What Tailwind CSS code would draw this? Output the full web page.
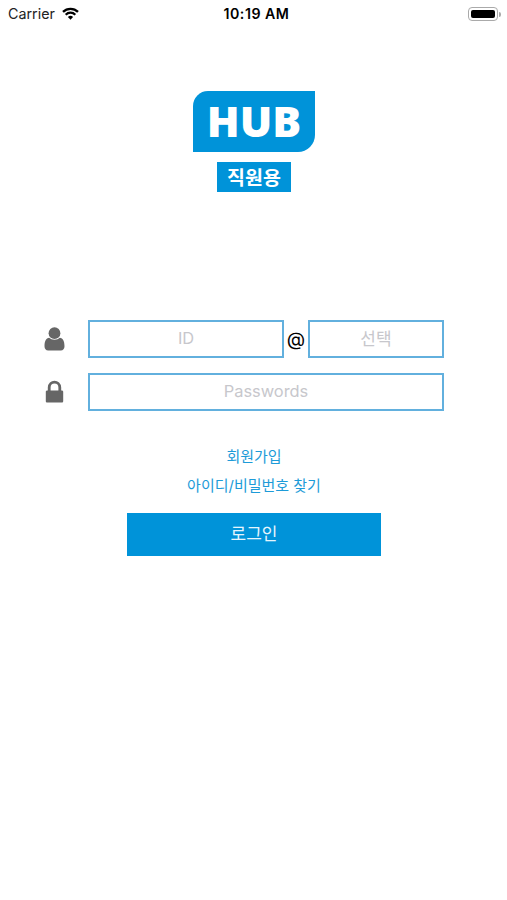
<!DOCTYPE html>
<html lang="ko">
<head>
    <meta charset="UTF-8">
    <meta name="viewport" content="width=device-width, initial-scale=1.0">
    <title>HUB 직원용</title>
    <script src="https://cdn.jsdelivr.net/npm/@tailwindcss/browser@4"></script>
</head>
<body class="min-h-screen overflow-hidden bg-white font-['Inter','Noto_Sans_CJK_KR',sans-serif] text-black">
    <!-- Status bar -->
    <header class="grid h-7 grid-cols-3 items-center pl-2 pr-1.5">
        <div class="flex items-center gap-[7px]">
            <span class="text-[14.3px] leading-none text-[#222]">Carrier</span>
            <svg class="h-[13px] w-[17px]" viewBox="0 0 17 13" fill="none" stroke="#000" stroke-width="2.3">
                <path d="M1 4.9a10.6 10.6 0 0 1 15 0" />
                <path d="M3.7 7.7a6.8 6.8 0 0 1 9.6 0" />
                <path d="M8.5 12.7L5.9 10a3.7 3.7 0 0 1 5.2 0z" fill="#000" stroke="none" />
            </svg>
        </div>
        <span class="pl-1 text-center text-[14.2px] font-semibold leading-none tracking-[0.5px] whitespace-nowrap">10:19 AM</span>
        <div class="flex items-center justify-end gap-px">
            <div class="h-[14px] w-[30px] rounded-[4px] border border-[#aaa] p-[2px]">
                <div class="h-full rounded-[2px] bg-black"></div>
            </div>
            <div class="h-[5px] w-[2px] rounded-r-full bg-[#aaa]"></div>
        </div>
    </header>

    <main>
        <!-- Logo -->
        <div class="mt-[63px] ml-[193px] flex w-[122px] flex-col items-center">
            <div class="flex h-[61px] w-full items-center justify-center rounded-tl-[15px] rounded-br-[17px] bg-[#0093d9] pb-[3px]">
                <span class="font-['Open_Sans',sans-serif] text-[43px] font-extrabold leading-none text-white">HUB</span>
            </div>
            <div class="mt-2.5 flex h-[30px] w-[74px] items-center justify-center bg-[#0093d9] pt-[3px]">
                <span class="text-[19.5px] font-bold leading-none text-white">직원용</span>
            </div>
        </div>

        <!-- Login form -->
        <form class="mt-32 ml-11 w-[400px]">
            <div class="flex h-[38px] items-center">
                <svg class="mr-[23px] h-6 w-[21px]" viewBox="0 0 21 24" fill="#666">
                    <path d="M5.2 10.8C2 10.8.5 14.4.5 19.3c0 2.4 1.4 4.2 3.7 4.2h12.6c2.3 0 3.7-1.8 3.7-4.2 0-4.9-1.5-8.5-4.7-8.5-1.3 1.3-3.1 2-5.3 2s-4-.7-5.3-2z" />
                    <circle cx="10.5" cy="6.2" r="5.9" />
                </svg>
                <input type="text" placeholder="ID" class="h-full w-[196px] border-2 border-[#62b0de] pb-0.5 text-center text-[16.4px] placeholder:text-[#c7c7cc]">
                <span class="w-6 text-center text-[19px] leading-none">@</span>
                <input type="text" placeholder="선택" class="h-full w-[136px] border-2 border-[#62b0de] pb-px text-center text-[17px] placeholder:text-[#c7c7cc]">
            </div>
            <div class="mt-[15px] flex h-[38px] items-center">
                <svg class="mr-[23px] h-6 w-[21px]" viewBox="0 0 21 24" fill="#666">
                    <path d="M3.2 10.4h14.6c.8 0 1.4.6 1.4 1.4v9.4c0 .8-.6 1.4-1.4 1.4H3.2c-.8 0-1.4-.6-1.4-1.4v-9.4c0-.8.6-1.4 1.4-1.4z" />
                    <path d="M5.2 11.5V7.6c0-7.3 10.6-7.3 10.6 0v3.9" fill="none" stroke="#666" stroke-width="2.8" />
                </svg>
                <input type="password" placeholder="Passwords" class="h-full w-[356px] border-2 border-[#62b0de] pb-0.5 text-center text-[16.4px] placeholder:text-[#c7c7cc]">
            </div>
        </form>

        <!-- Links and submit -->
        <div class="mt-[31px] ml-[127px] flex w-[254px] flex-col items-center text-[15px] text-[#1d9bd8]">
            <a href="#" class="leading-[29px]">회원가입</a>
            <a href="#" class="leading-[29px] whitespace-nowrap">아이디/비밀번호 찾기</a>
            <button class="mt-[13px] h-[43px] w-full bg-[#0093d9] text-[17px] text-[#e5f5fd]">로그인</button>
        </div>
    </main>
</body>
</html>
